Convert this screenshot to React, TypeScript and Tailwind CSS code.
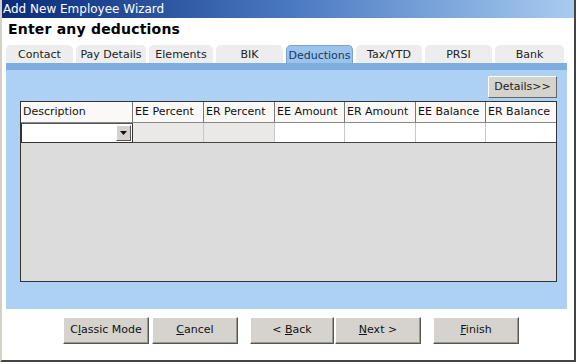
import React from "react";

const tabs = [
  { label: "Contact", w: "w-[67px]" },
  { label: "Pay Details", w: "w-[70px]" },
  { label: "Elements", w: "w-[64px]" },
  { label: "BIK", w: "w-[67px]" },
  { label: "Deductions", w: "w-[67px]", active: true },
  { label: "Tax/YTD", w: "w-[66px]" },
  { label: "PRSI", w: "w-[67px]" },
  { label: "Bank", w: "w-[69px]" },
];

const columns = [
  { label: "Description", w: "w-[112px]" },
  { label: "EE Percent", w: "w-[71px]" },
  { label: "ER Percent", w: "w-[71px]" },
  { label: "EE Amount", w: "w-[70px]" },
  { label: "ER Amount", w: "w-[71px]" },
  { label: "EE Balance", w: "w-[70px]" },
  { label: "ER Balance", w: "flex-1" },
];

const WinButton = ({
  children,
  className,
}: {
  children: React.ReactNode;
  className: string;
}) => (
  <button
    className={
      "h-[27px] bg-[#d6d3ce] border border-t-white border-l-white border-r-[#555] border-b-[#555] shadow-[inset_-1px_-1px_0_#9a978f] text-[11px] text-[#111] " +
      className
    }
  >
    {children}
  </button>
);

const App = (): React.ReactElement => {
  return (
    <div
      className="w-[576px] h-[362px] bg-white flex flex-col border-l-2 border-l-[#d4d0c8] border-r-2 border-r-[#444] border-b-2 border-b-[#444] overflow-hidden"
      style={{ fontFamily: '"DejaVu Sans", Verdana, sans-serif' }}
    >
      <div className="h-[18px] bg-gradient-to-r from-[#0a2a78] via-[#4a78c0] to-[#a8ccf0] text-white text-[12px] leading-[18px] pl-[1px]">
        Add New Employee Wizard
      </div>
      <div className="pl-[6px] pt-[1px] h-[24px] text-[14px] font-bold text-black leading-[20px] tracking-[0.2px]">
        Enter any deductions
      </div>
      <div className="flex gap-[3px] pl-[4px] mt-[3px] h-[18px] items-end">
        {tabs.map((t) => (
          <div
            key={t.label}
            className={
              t.w +
              " h-[18px] rounded-t-[5px] text-[11px] leading-[19px] text-center " +
              (t.active
                ? "bg-[#9cc3ea] text-[#123a66] border border-b-0 border-[#7aa3cf]"
                : "bg-[#ededed] text-[#222]")
            }
          >
            {t.label}
          </div>
        ))}
      </div>
      <div className="ml-[4px] w-[561px] h-[246px] bg-[#acd1f5] border-t-[7px] border-t-[#7eaee0] flex flex-col">
        <div className="flex justify-end pr-[10px] pt-[6px]">
          <button className="w-[69px] h-[22px] bg-[#d6d3ce] border border-t-white border-l-white border-r-[#666] border-b-[#666] text-[11px] text-[#222]">
            Details&gt;&gt;
          </button>
        </div>
        <div className="ml-[14px] mt-[3px] w-[537px] h-[181px] border border-[#333] bg-[#dcdcdc] flex flex-col">
          <div className="flex h-[21px] bg-[#fbf8f8] border-b border-[#888]">
            {columns.map((c, i) => (
              <div
                key={c.label}
                className={
                  c.w +
                  " text-[11px] leading-[20px] text-[#111] pl-[2px] whitespace-nowrap overflow-hidden " +
                  (i < columns.length - 1 ? "border-r border-[#777]" : "")
                }
              >
                {c.label}
              </div>
            ))}
          </div>
          <div className="flex h-[20px] border-b border-[#444]">
            <div className="w-[112px] h-[20px] bg-white border border-[#333] border-t-[#555] flex justify-end items-stretch p-[1px]">
              <div className="w-[15px] bg-[#d6d3ce] border border-t-white border-l-white border-r-[#555] border-b-[#555] flex items-center justify-center">
                <svg width="7" height="4" viewBox="0 0 7 4">
                  <path d="M0 0h7L3.5 4z" fill="#111" />
                </svg>
              </div>
            </div>
            <div className="w-[71px] bg-[#ebe8e8] border-r border-[#c8c8c8]" />
            <div className="w-[71px] bg-[#ebe8e8] border-r border-[#c8c8c8]" />
            <div className="w-[70px] bg-white border-r border-[#c8c8c8]" />
            <div className="w-[71px] bg-white border-r border-[#c8c8c8]" />
            <div className="w-[70px] bg-white border-r border-[#c8c8c8]" />
            <div className="flex-1 bg-white" />
          </div>
        </div>
      </div>
      <div className="flex pt-[8px] pl-[61px]">
        <WinButton className="w-[86px]">
          C<span className="underline">l</span>assic Mode
        </WinButton>
        <WinButton className="w-[86px] ml-[3px]">
          <span className="underline">C</span>ancel
        </WinButton>
        <WinButton className="w-[84px] ml-[12px]">
          &lt; <span className="underline">B</span>ack
        </WinButton>
        <WinButton className="w-[86px] ml-[1px]">
          <span className="underline">N</span>ext &gt;
        </WinButton>
        <WinButton className="w-[86px] ml-[12px]">
          <span className="underline">F</span>inish
        </WinButton>
      </div>
    </div>
  );
};

export default App;
